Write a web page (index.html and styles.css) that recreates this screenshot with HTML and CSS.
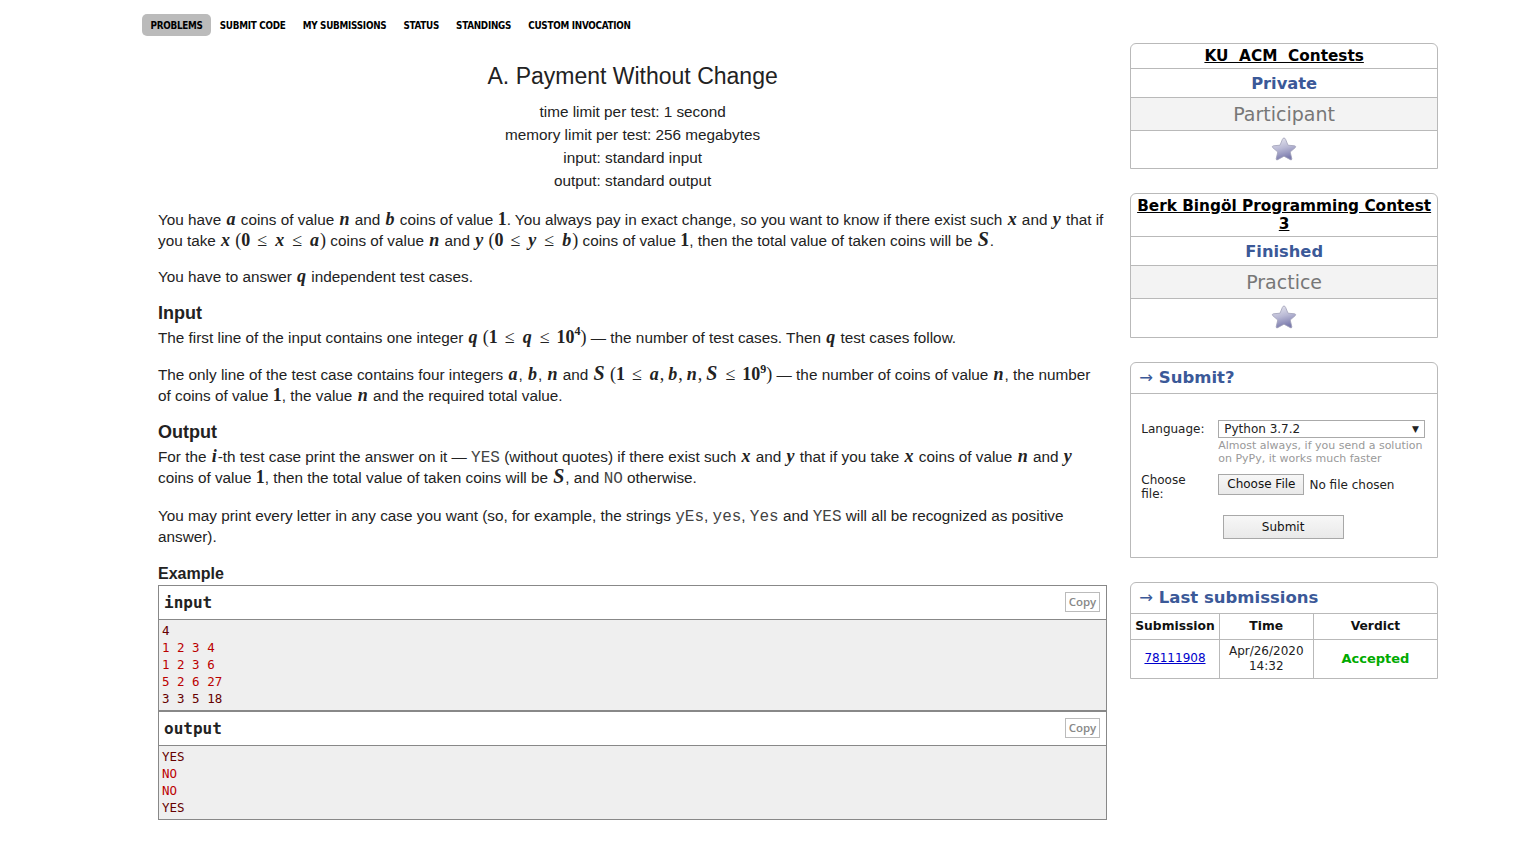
FILE: index.html
```html
<!DOCTYPE html>
<html>
<head>
<meta charset="utf-8">
<link rel="stylesheet" href="styles.css">
</head>
<body>
<div class="page">
  <nav class="menu">
    <a class="menu-item active">PROBLEMS</a>
    <a class="menu-item">SUBMIT CODE</a>
    <a class="menu-item">MY SUBMISSIONS</a>
    <a class="menu-item">STATUS</a>
    <a class="menu-item">STANDINGS</a>
    <a class="menu-item">CUSTOM INVOCATION</a>
  </nav>
  <div class="layout">
    <main class="problem">
      <div class="header">
        <div class="title">A. Payment Without Change</div>
        <div class="limit">time limit per test: 1 second</div>
        <div class="limit">memory limit per test: 256 megabytes</div>
        <div class="limit">input: standard input</div>
        <div class="limit">output: standard output</div>
      </div>
      <p>You have <i class="m">a</i> coins of value <i class="m">n</i> and <i class="m">b</i> coins of value <b class="n">1</b>. You always pay in exact change, so you want to know if there exist such <i class="m">x</i> and <i class="m">y</i> that if you take <i class="m">x</i> <span class="mm">(<b class="n">0</b><span class="rel">≤</span><i class="m">x</i><span class="rel">≤</span><i class="m">a</i>)</span> coins of value <i class="m">n</i> and <i class="m">y</i> <span class="mm">(<b class="n">0</b><span class="rel">≤</span><i class="m">y</i><span class="rel">≤</span><i class="m">b</i>)</span> coins of value <b class="n">1</b>, then the total value of taken coins will be <i class="m big">S</i>.</p>
      <p>You have to answer <i class="m">q</i> independent test cases.</p>
      <div class="section-title">Input</div>
      <p class="tight">The first line of the input contains one integer <i class="m">q</i> <span class="mm">(<b class="n">1</b><span class="rel">≤</span><i class="m">q</i><span class="rel">≤</span><b class="n">10<sup>4</sup></b>)</span> — the number of test cases. Then <i class="m">q</i> test cases follow.</p>
      <p>The only line of the test case contains four integers <i class="m">a</i>, <i class="m">b</i>, <i class="m">n</i> and <i class="m big">S</i> <span class="mm">(<b class="n">1</b><span class="rel">≤</span><i class="m">a</i>,<span class="thin"></span><i class="m">b</i>,<span class="thin"></span><i class="m">n</i>,<span class="thin"></span><i class="m big">S</i><span class="rel">≤</span><b class="n">10<sup>9</sup></b>)</span> — the number of coins of value <i class="m">n</i>, the number of coins of value <b class="n">1</b>, the value <i class="m">n</i> and the required total value.</p>
      <div class="section-title">Output</div>
      <p class="tight">For the <i class="m">i</i>-th test case print the answer on it — <span class="tt">YES</span> (without quotes) if there exist such <i class="m">x</i> and <i class="m">y</i> that if you take <i class="m">x</i> coins of value <i class="m">n</i> and <i class="m">y</i> coins of value <b class="n">1</b>, then the total value of taken coins will be <i class="m big">S</i>, and <span class="tt">NO</span> otherwise.</p>
      <p>You may print every letter in any case you want (so, for example, the strings <span class="tt">yEs</span>, <span class="tt">yes</span>, <span class="tt">Yes</span> and <span class="tt">YES</span> will all be recognized as positive answer).</p>
      <div class="example-title">Example</div>
      <div class="sample">
        <div class="sample-head"><span>input</span><span class="copy">Copy</span></div>
        <pre class="sample-body"><span class="l0">4</span>
<span class="l1">1 2 3 4</span>
<span class="l1">1 2 3 6</span>
<span class="l1">5 2 6 27</span>
<span class="l0">3 3 5 18</span></pre>
        <div class="sample-head"><span>output</span><span class="copy">Copy</span></div>
        <pre class="sample-body"><span class="l0">YES</span>
<span class="l1">NO</span>
<span class="l1">NO</span>
<span class="l0">YES</span></pre>
      </div>
    </main>
    <aside class="sidebar">
      <div class="box">
        <div class="row title-row"><a class="contest-link">KU&nbsp;&nbsp;ACM&nbsp;&nbsp;Contests</a></div>
        <div class="row phase">Private</div>
        <div class="row role">Participant</div>
        <div class="row star-row">
          <svg width="30" height="28" viewBox="0 0 30 28"><defs><linearGradient id="sg1" x1="0" y1="0" x2="0.3" y2="1"><stop offset="0" stop-color="#ececf2"/><stop offset="0.55" stop-color="#b8b8d4"/><stop offset="1" stop-color="#7c7cae"/></linearGradient></defs><path d="M15 2 Q16 2 16.6 3.4 L19 9.2 L25.6 9.8 Q27.4 10.2 26.3 11.6 L21.2 16 L22.8 22.6 Q23 24.4 21.4 23.7 L15 20.2 L8.6 23.7 Q7 24.4 7.2 22.6 L8.8 16 L3.7 11.6 Q2.6 10.2 4.4 9.8 L11 9.2 L13.4 3.4 Q14 2 15 2 Z" fill="url(#sg1)" stroke="#a0a0b8" stroke-width="0.8"/></svg>
        </div>
      </div>
      <div class="box">
        <div class="row title-row"><a class="contest-link">Berk Bingöl Programming Contest 3</a></div>
        <div class="row phase">Finished</div>
        <div class="row role">Practice</div>
        <div class="row star-row tall">
          <svg width="30" height="28" viewBox="0 0 30 28"><defs><linearGradient id="sg2" x1="0" y1="0" x2="0.3" y2="1"><stop offset="0" stop-color="#ececf2"/><stop offset="0.55" stop-color="#b8b8d4"/><stop offset="1" stop-color="#7c7cae"/></linearGradient></defs><path d="M15 2 Q16 2 16.6 3.4 L19 9.2 L25.6 9.8 Q27.4 10.2 26.3 11.6 L21.2 16 L22.8 22.6 Q23 24.4 21.4 23.7 L15 20.2 L8.6 23.7 Q7 24.4 7.2 22.6 L8.8 16 L3.7 11.6 Q2.6 10.2 4.4 9.8 L11 9.2 L13.4 3.4 Q14 2 15 2 Z" fill="url(#sg2)" stroke="#a0a0b8" stroke-width="0.8"/></svg>
        </div>
      </div>
      <div class="box">
        <div class="caption"><span class="arrow">→</span> Submit?</div>
        <div class="submit-form">
          <div class="form-row">
            <div class="label">Language:</div>
            <div class="field">
              <div class="select"><span>Python 3.7.2</span><span class="tri">▼</span></div>
              <div class="hint">Almost always, if you send a solution on PyPy, it works much faster</div>
            </div>
          </div>
          <div class="form-row file-row">
            <div class="label">Choose<br>file:</div>
            <div class="field file-field"><span class="btn file-btn">Choose File</span><span>No file chosen</span></div>
          </div>
          <div class="submit-wrap"><span class="btn submit-btn">Submit</span></div>
        </div>
      </div>
      <div class="box">
        <div class="caption"><span class="arrow">→</span> Last submissions</div>
        <table class="subs">
          <tr><th class="c1">Submission</th><th class="c2">Time</th><th>Verdict</th></tr>
          <tr><td><a class="sublink">78111908</a></td><td>Apr/26/2020<br>14:32</td><td class="ok">Accepted</td></tr>
        </table>
      </div>
    </aside>
  </div>
</div>
</body>
</html>
```
FILE: styles.css
```css
* { box-sizing: border-box; }
body {
  margin: 0;
  background: #fff;
  color: #222;
  font-family: "Liberation Sans", Arial, sans-serif;
}
.page {
  width: 1296px;
  margin-left: 142px;
  padding-top: 14px;
}
.menu {
  display: flex;
  align-items: center;
  height: 22px;
}
.menu-item {
  font-family: "DejaVu Sans Condensed", "DejaVu Sans", sans-serif;
  font-weight: bold;
  font-size: 9.8px;
  color: #000;
  padding: 0 8.5px;
  height: 22px;
  line-height: 23px;
  border-radius: 5px;
  letter-spacing: -0.25px;
}
.menu-item.active { background: #bbb; }
.layout {
  display: flex;
  align-items: flex-start;
  gap: 23px;
}
.problem {
  width: 950px;
  margin-left: 16px;
  font-size: 15.3px;
  line-height: 21px;
}
.header { text-align: center; padding-top: 25px; margin-bottom: 17px; }
.title { font-size: 23px; line-height: 30px; margin-bottom: 9px; color: #222; }
.limit { line-height: 23px; }
.problem p { margin: 0 0 14.5px 0; }
.problem p.tight { margin-bottom: 16.5px; }
.m {
  font-family: "Liberation Serif", "Times New Roman", serif;
  font-style: italic;
  font-weight: bold;
  font-size: 18px;
  line-height: 1;
  padding: 0 1px 0 1px;
}
.m.big { font-size: 20px; line-height: 0.9; }
.n {
  font-family: "Liberation Serif", "Times New Roman", serif;
  font-weight: bold;
  font-size: 18px;
  line-height: 1;
}
.n sup {
  font-size: 12px;
  line-height: 1;
  vertical-align: baseline;
  position: relative;
  top: -0.6em;
}
.mm { font-family: "Liberation Serif", serif; font-size: 18px; line-height: 1; }
.rel { margin: 0 7px; }
.thin { display: inline-block; width: 3px; }
.tt { font-family: "Liberation Mono", "Courier New", monospace; font-size: 16px; color: #444; line-height: 1; }
.section-title {
  font-weight: bold;
  font-size: 18px;
  line-height: 22px;
  margin-top: 15px;
  margin-bottom: 3px;
  color: #222;
}
.example-title {
  font-weight: bold;
  font-size: 16px;
  line-height: 20px;
  margin-top: 17px;
  margin-bottom: 1px;
}
.sample { border: 1px solid #888; }
.sample-head {
  display: flex;
  justify-content: space-between;
  align-items: center;
  height: 34px;
  padding: 0 6px 0 5px;
  font-family: "DejaVu Sans Mono", "Liberation Mono", monospace;
  font-weight: bold;
  font-size: 16px;
  border-bottom: 1px solid #888;
}
.copy {
  font-family: "Open Sans", "DejaVu Sans", sans-serif;
  font-weight: 600;
  font-size: 11.5px;
  color: #888;
  border: 1px solid #bbb;
  padding: 0 3px;
  line-height: 18px;
}
.sample-body {
  margin: 0;
  background: #efefef;
  font-family: "DejaVu Sans Mono", monospace;
  font-size: 12.5px;
  line-height: 17px;
  padding: 2px 3px 3px 3px;
  border-bottom: 2px solid #888;
}
.sample-body:last-child { border-bottom: none; }
.l0 { color: #600; }
.l1 { color: #b00; }
.sidebar {
  width: 308px;
  margin-top: 7px;
  font-family: "DejaVu Sans", Verdana, sans-serif;
}
.box {
  border: 1px solid #b9b9b9;
  border-radius: 6px 6px 0 0;
  margin-bottom: 24px;
}
.row {
  border-bottom: 1px solid #b9b9b9;
  text-align: center;
}
.row:last-child { border-bottom: none; }
.title-row { padding: 3px 4px 3px; line-height: 18px; }
.contest-link {
  color: #000;
  font-weight: bold;
  font-size: 15.3px;
  text-decoration: underline;
}
.phase {
  color: #3b5998;
  font-weight: bold;
  font-size: 16.3px;
  line-height: 27px;
  padding-top: 1px;
}
.role {
  background: #f3f3f3;
  color: #777;
  font-size: 19px;
  line-height: 32px;
}
.star-row { height: 37px; display: flex; align-items: center; justify-content: center; }
.star-row.tall { height: 38px; }
.caption {
  color: #3b5998;
  font-weight: bold;
  font-size: 16.5px;
  line-height: 30px;
  padding-left: 8px;
  border-bottom: 1px solid #b9b9b9;
}
.arrow { font-weight: normal; font-family: "DejaVu Sans", sans-serif; }
.submit-form { padding: 26px 12px 18px 10px; font-size: 12px; color: #222; }
.form-row { display: flex; }
.label { width: 77px; line-height: 14px; padding-top: 2px; }
.field { flex: 1; }
.select {
  display: flex;
  justify-content: space-between;
  border: 1px solid #aaa;
  height: 18px;
  line-height: 16px;
  padding: 0 5px;
  font-size: 12px;
}
.tri { font-size: 9px; }
.hint { color: #999; font-size: 11px; line-height: 13px; padding-top: 1px; }
.file-row { margin-top: 6px; }
.file-field { display: flex; align-items: center; gap: 5px; padding-top: 3px; align-self: flex-start; }
.btn {
  border: 1px solid #a8a8a8;
  background: linear-gradient(#f7f7f7, #e9e9e9);
  font-size: 12px;
  line-height: 19px;
  padding: 0 8px;
  color: #111;
}
.submit-wrap { text-align: center; margin-top: 14px; }
.submit-btn { display: inline-block; width: 121px; line-height: 22px; }
.subs { width: 100%; border-collapse: collapse; font-size: 12px; table-layout: fixed; }
.subs .c1 { width: 88px; }
.subs .c2 { width: 94px; }
.subs th { font-weight: bold; line-height: 25px; border-bottom: 1px solid #b9b9b9; border-right: 1px solid #b9b9b9; color: #111; font-size: 12.3px; padding: 0; }
.subs td { text-align: center; line-height: 15px; height: 38px; border-right: 1px solid #b9b9b9; font-size: 12px; padding: 0; }
.subs th:last-child, .subs td:last-child { border-right: none; }
.sublink { color: #00c; text-decoration: underline; }
.ok { color: #0a0; font-weight: bold; font-size: 13px !important; }
```
